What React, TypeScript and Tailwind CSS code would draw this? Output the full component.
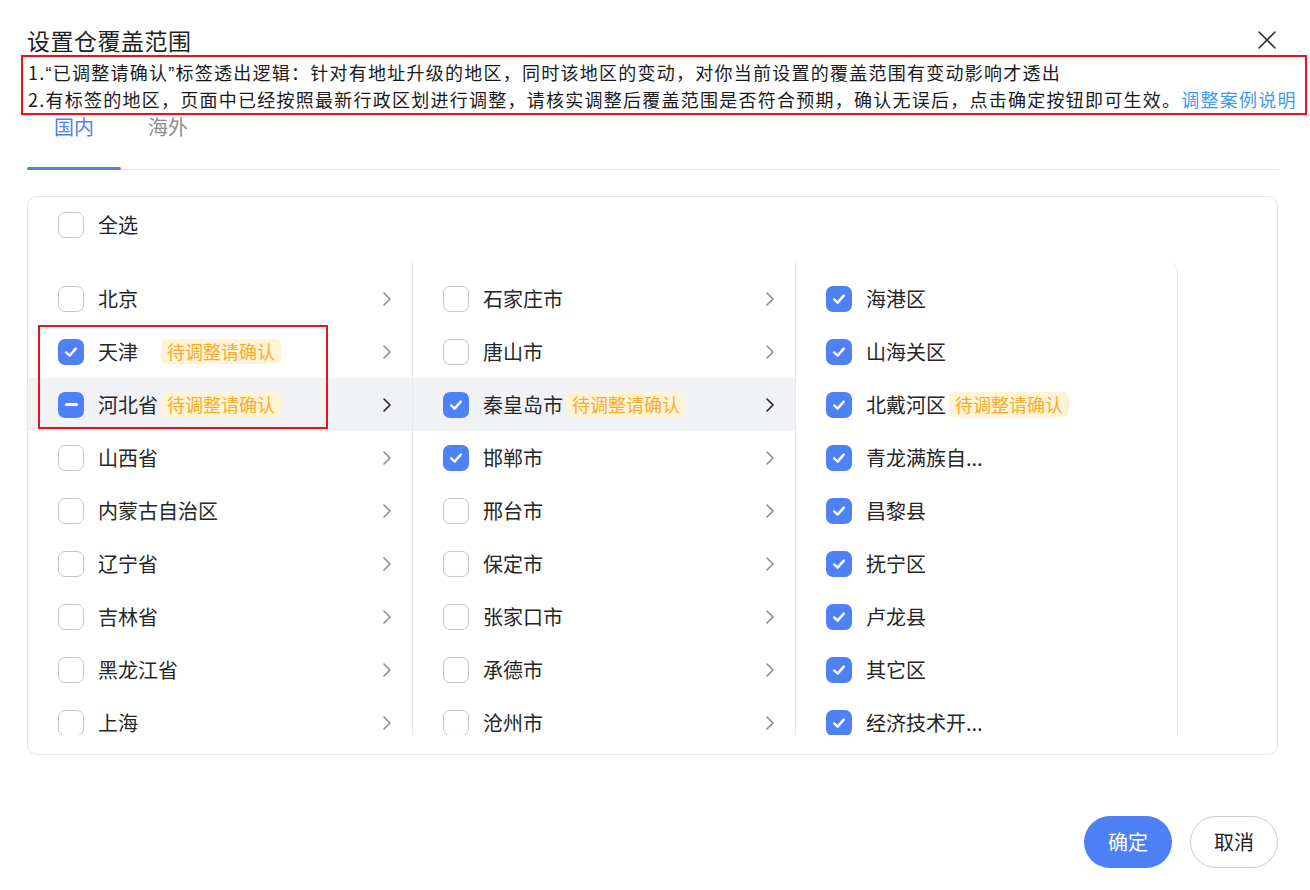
import React from 'react';

type CheckState = 'none' | 'checked' | 'partial';

interface Region {
  name: string;
  state: CheckState;
  pending?: boolean;
  active?: boolean;
}

const provinces: Region[] = [
  { name: '北京', state: 'none' },
  { name: '天津', state: 'checked', pending: true },
  { name: '河北省', state: 'partial', pending: true, active: true },
  { name: '山西省', state: 'none' },
  { name: '内蒙古自治区', state: 'none' },
  { name: '辽宁省', state: 'none' },
  { name: '吉林省', state: 'none' },
  { name: '黑龙江省', state: 'none' },
  { name: '上海', state: 'none' },
];

const cities: Region[] = [
  { name: '石家庄市', state: 'none' },
  { name: '唐山市', state: 'none' },
  { name: '秦皇岛市', state: 'checked', pending: true, active: true },
  { name: '邯郸市', state: 'checked' },
  { name: '邢台市', state: 'none' },
  { name: '保定市', state: 'none' },
  { name: '张家口市', state: 'none' },
  { name: '承德市', state: 'none' },
  { name: '沧州市', state: 'none' },
];

const districts: Region[] = [
  { name: '海港区', state: 'checked' },
  { name: '山海关区', state: 'checked' },
  { name: '北戴河区', state: 'checked', pending: true },
  { name: '青龙满族自...', state: 'checked' },
  { name: '昌黎县', state: 'checked' },
  { name: '抚宁区', state: 'checked' },
  { name: '卢龙县', state: 'checked' },
  { name: '其它区', state: 'checked' },
  { name: '经济技术开...', state: 'checked' },
];

function Checkbox({ state }: { state: CheckState }) {
  if (state === 'none') {
    return <span className="w-[26px] h-[26px] shrink-0 rounded-[7px] border-[1.5px] border-[#c2c5cc] bg-white" />;
  }
  return (
    <span className="w-[26px] h-[26px] shrink-0 rounded-[7px] bg-[#4e80f6] flex items-center justify-center">
      {state === 'checked' ? (
        <svg width="16" height="16" viewBox="0 0 16 16" fill="none">
          <polyline points="3.2,8.4 6.6,11.6 12.8,4.6" stroke="#fff" strokeWidth="2.4" strokeLinecap="round" strokeLinejoin="round" />
        </svg>
      ) : (
        <span className="w-[13px] h-[3px] rounded-full bg-white" />
      )}
    </span>
  );
}

function Chevron({ dark }: { dark?: boolean }) {
  return (
    <svg width="10" height="16" viewBox="0 0 10 16" fill="none">
      <polyline points="2,2 8,8 2,14" stroke={dark ? '#222222' : '#8a8d93'} strokeWidth="1.6" strokeLinecap="round" strokeLinejoin="round" />
    </svg>
  );
}

function Badge() {
  return (
    <span className="ml-[3px] h-[25px] px-[6px] rounded-[5px] bg-[#fff3d6] text-[#f6ad2f] text-[18px] leading-[25px] whitespace-nowrap">
      待调整请确认
    </span>
  );
}

function Column({ items, arrow, minLabel, width, last }: { items: Region[]; arrow?: boolean; minLabel?: boolean; width: string; last?: boolean }) {
  return (
    <div className={`${width} shrink-0 h-full overflow-hidden pt-[10px] border-r border-[#e8e9ed] ${last ? 'rounded-tr-[10px]' : ''}`}>
      {items.map((it) => (
        <div
          key={it.name}
          className={`h-[53px] flex items-center pl-[30px] pr-[20px] ${it.active ? 'bg-[#f1f2f5]' : ''}`}
        >
          <Checkbox state={it.state} />
          <span className={`ml-[14px] text-[20px] leading-[26px] text-[#262626] whitespace-nowrap ${minLabel ? 'min-w-[60px]' : ''}`}>
            {it.name}
          </span>
          {it.pending && <Badge />}
          <span className="flex-1" />
          {arrow && <Chevron dark={it.active} />}
        </div>
      ))}
    </div>
  );
}

const quote = { fontFamily: '"Liberation Sans", sans-serif' };

export default function App() {
  return (
    <div
      className="w-[1310px] h-[890px] bg-white pl-[27px] pr-[32px] pt-[28px] overflow-hidden"
      style={{ fontFamily: '"Noto Sans CJK SC", "Noto Sans", sans-serif' }}
    >
      {/* Title */}
      <div className="flex items-center justify-between h-[24px]">
        <h1 className="text-[23px] leading-[24px] tracking-[0.5px] text-[#1f1f1f]">设置仓覆盖范围</h1>
        <svg width="20" height="20" viewBox="0 0 20 20" fill="none" className="mr-[1px]">
          <path d="M2 2L18 18M18 2L2 18" stroke="#333" strokeWidth="1.6" strokeLinecap="round" />
        </svg>
      </div>

      {/* Notice */}
      <div className="mt-[3px] -ml-[6px] w-[1286px] h-[60px] border-2 border-[#e8141a] pt-[2px] pl-[5px] text-[18px] leading-[27px] tracking-[1.25px] text-[#1a1a1a] bg-white">
        <p className="h-[27px] whitespace-nowrap">
          1.<span style={quote}>“</span>已调整请确认<span style={quote}>”</span>标签透出逻辑：针对有地址升级的地区，同时该地区的变动，对你当前设置的覆盖范围有变动影响才透出
        </p>
        <p className="h-[27px] whitespace-nowrap">
          2.有标签的地区，页面中已经按照最新行政区划进行调整，请核实调整后覆盖范围是否符合预期，确认无误后，点击确定按钮即可生效。
          <span className="text-[#3d9bef]">调整案例说明</span>
        </p>
      </div>

      {/* Tabs */}
      <div className="flex border-b border-[#e5e6eb] h-[55px]">
        <div className="relative w-[94px] flex justify-center">
          <span className="text-[20px] leading-[24px] text-[#4e80f6]">国内</span>
          <span className="absolute left-0 right-0 -bottom-[1px] h-[3px] bg-[#4e80f6] rounded-full" />
        </div>
        <div className="w-[94px] flex justify-center">
          <span className="text-[20px] leading-[24px] text-[#8c8c8c]">海外</span>
        </div>
      </div>

      {/* Panel */}
      <div className="relative mt-[26px] h-[559px] border border-[#e5e6eb] rounded-[10px] flex flex-col">
        <div className="pt-[15px] pl-[30px] flex items-center">
          <Checkbox state="none" />
          <span className="ml-[14px] text-[20px] leading-[26px] text-[#262626]">全选</span>
        </div>
        <div className="mt-[24px] h-[473px] flex">
          <Column items={provinces} arrow minLabel width="w-[385px]" />
          <Column items={cities} arrow width="w-[383px]" />
          <Column items={districts} last width="w-[382px]" />
        </div>

        {/* annotation box */}
        <div className="absolute left-[10px] top-[128px] w-[290px] h-[104px] border-2 border-[#e8141a] pointer-events-none" />
      </div>

      {/* Footer */}
      <div className="mt-[61px] flex justify-end gap-[18px]">
        <button className="w-[88px] h-[52px] rounded-full bg-[#4e80f6] text-white text-[20px]">确定</button>
        <button className="w-[88px] h-[52px] rounded-full border border-[#c9ccd3] bg-white text-[#222] text-[20px]">取消</button>
      </div>
    </div>
  );
}
